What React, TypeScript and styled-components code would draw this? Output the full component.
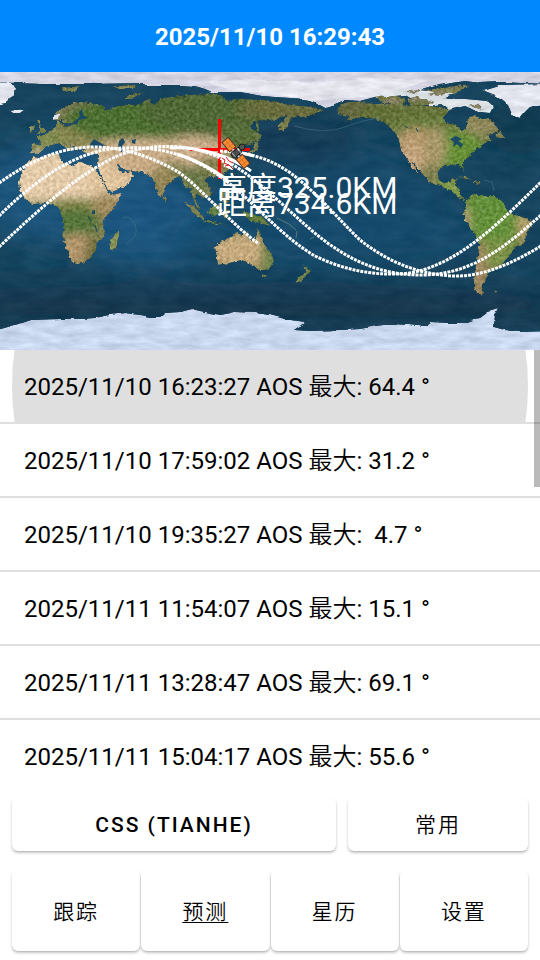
import React, { useState } from "react";
import styled, { createGlobalStyle } from "styled-components";

const GlobalStyle = createGlobalStyle`
  * { box-sizing: border-box; }
  body {
    margin: 0;
    background: #fff;
    color: #000;
    font-family: Roboto, "Noto Sans CJK SC", sans-serif;
  }
  button { font: inherit; color: inherit; cursor: pointer; }
`;

const Screen = styled.div`
  display: flex;
  flex-direction: column;
  height: 100vh;
`;

const Header = styled.header`
  flex: none;
  display: flex;
  align-items: center;
  justify-content: center;
  height: 72px;
  padding-top: 2px;
  background: #0088ff;
`;

const Clock = styled.h1`
  margin: 0;
  color: #fff;
  font-size: 24px;
  line-height: 32px;
  font-weight: 700;
`;

const MapView = styled.svg`
  flex: none;
  display: block;
  width: 100%;
  height: auto;
`;

const PassSection = styled.section`
  position: relative;
  flex: 1 1 0;
  min-height: 0;
  overflow: hidden;
`;

const PassList = styled.ul`
  margin: 0;
  padding: 0;
  list-style: none;
`;

const PassItem = styled.li`
  border-bottom: 2px solid #dfdfdf;

  &:last-child { border-bottom: 0; }
`;

const PassButton = styled.button<{ $active: boolean }>`
  position: relative;
  display: block;
  width: 100%;
  height: 72px;
  padding: 2px 24px 0;
  border: 0;
  background: none;
  text-align: left;
  font-size: 24px;
  line-height: 32px;
  white-space: pre;
  clip-path: inset(0 0 -2px 0);

  &::before {
    content: "";
    display: ${(p) => (p.$active ? "block" : "none")};
    position: absolute;
    left: 12px;
    right: 12px;
    top: 50%;
    aspect-ratio: 1;
    border-radius: 50%;
    background: #dfdfdf;
    transform: translateY(-50%);
  }
`;

const PassText = styled.span`
  position: relative;
`;

const LightLabel = styled.span`
  font-weight: 350;
`;

const ScrollThumb = styled.div`
  position: absolute;
  top: 0;
  right: 0;
  width: 6px;
  height: 31%;
  background: rgba(0, 0, 0, 0.27);
`;

const Controls = styled.div`
  flex: none;
  display: grid;
  grid-template-columns: 9fr 5fr;
  gap: 12px;
  padding: 5px 12px 19px;
`;

const Tabs = styled.nav`
  flex: none;
  display: grid;
  grid-template-columns: repeat(4, 1fr);
  gap: 1px;
  padding: 0 12px 9px;
`;

const Key = styled.button<{ $tall?: boolean; $current?: boolean }>`
  height: ${(p) => (p.$tall ? 81 : 54)}px;
  padding: 2px 0 0;
  border: 0;
  border-radius: 6px;
  background: #fff;
  box-shadow: 0 2px 3px rgba(0, 0, 0, 0.22), 0 1px 1px rgba(0, 0, 0, 0.08);
  font-size: 21px;
  line-height: 28px;
  font-weight: ${(p) => (p.$tall ? 350 : 500)};
  letter-spacing: 2px;
  text-decoration: ${(p) => (p.$current ? "underline" : "none")};
  text-decoration-thickness: 1px;
  text-underline-offset: 3px;
`;

const passes = [
  ["2025/11/10 16:23:27", "64.4"],
  ["2025/11/10 17:59:02", "31.2"],
  ["2025/11/10 19:35:27", " 4.7"],
  ["2025/11/11 11:54:07", "15.1"],
  ["2025/11/11 13:28:47", "69.1"],
  ["2025/11/11 15:04:17", "55.6"],
];

const tabs = ["跟踪", "预测", "星历", "设置"];

const land = [
  // Africa, Arabia, Madagascar
  "M32 157L27 163L22 171L19 182L20 190L25 199L32 204L45 203L53 204L59 208L63 220L64 228L62 236L66 248L72 262L76 264L83 263L90 258L96 249L97 243L104 237L105 232L103 222L108 214L115 207L120 197L121 193L111 195L108 192L103 182L95 168L84 163L78 161L74 166L64 163L60 158L59 154L50 154L39 158Z",
  "M98 168L100 158L115 160L118 168L122 173L131 171L134 176L128 184L121 188L112 192L108 190L104 182Z",
  "M119 230L119 238L116 248L112 250L110 246L111 240Z",
  // Europe and Asia
  "M31 153L31 147L33 144L41 145L40 140L36 137L44 135L49 132L55 128L57 123L59 119L61 124L66 127L76 124L77 119L72 123L64 124L62 119L57 121L54 118L55 113L60 110L68 105L76 102L85 102L95 104L105 107L104 111L99 112L108 110L120 106L130 105L140 104L146 100L150 99L151 104L158 103L160 99L172 97L190 95L215 94L222 96L228 101L240 99L255 100L270 101L285 104L300 106L312 107L323 110L320 112L313 113L316 114L305 117L298 116L290 119L288 126L283 132L278 130L279 124L288 116L280 117L277 120L262 120L256 121L250 126L252 129L256 131L258 136L255 141L250 145L244 144L243 149L240 150L239 154L236 154L235 149L231 148L233 152L235 158L230 168L222 175L214 177L208 177L205 180L210 188L211 195L204 199L201 196L196 194L195 200L199 206L201 211L196 206L193 198L190 187L186 188L183 182L180 176L175 179L167 184L165 190L162 198L158 194L155 185L152 177L148 176L143 172L132 171L125 170L119 165L117 164L119 171L98 166L99 154L90 154L83 152L84 149L80 147L77 151L73 147L69 143L73 149L68 151L64 146L60 143L52 145L45 147L42 152L36 154Z",
  "M37 121L40 121L41 127L46 131L43 133L37 133L40 129ZM30 127L34 125L35 130L30 132ZM60 88L80 86L76 91L64 91ZM124 99L130 94L146 92L139 94L132 99ZM112 86L135 85L136 88L118 88Z",
  "M165 195L167 199L165 202L163 199ZM257 132L262 135L258 142L258 149L253 153L246 156L246 153L254 149L255 141Z",
  "M256 121L259 124L259 132L256 129ZM222 187L226 189L225 197L229 202L226 206L222 198ZM185 201L190 204L199 211L205 219L202 220L192 212ZM203 220L218 223L231 225L216 224L205 222ZM209 210L216 204L222 203L220 213L213 217L208 213ZM224 210L231 211L227 214L230 220L224 217Z",
  "M242 211L252 214L262 217L271 226L263 224L252 221L246 218Z",
  // Australia and New Zealand
  "M215 247L222 241L232 237L236 232L242 235L248 231L247 236L253 241L256 237L258 228L261 235L265 245L272 255L274 261L270 268L265 270L258 270L254 266L249 263L240 260L230 263L218 265L217 258Z",
  "M262 274L267 275L265 278L262 277ZM303 264L308 269L311 271L306 276L301 281L295 283L299 277L306 273Z",
  // The Americas
  "M337 110L342 104L348 102L360 102L375 104L395 104L410 106L430 106L445 109L452 108L447 113L443 118L446 123L455 125L463 131L466 129L468 117L475 116L483 119L488 118L495 124L499 130L494 134L487 135L492 140L485 143L480 147L474 151L470 155L465 160L463 164L464 172L461 168L458 164L448 165L441 167L438 173L439 180L444 183L450 182L452 178L457 179L455 185L460 190L460 196L466 199L464 200L456 195L450 190L440 186L430 183L424 176L415 165L411 161L415 168L420 175L413 169L408 160L401 150L399 140L396 134L390 128L384 122L375 119L365 117L355 118L345 122L350 117L340 114Z",
  "M495 136L500 131L505 138L499 138ZM458 176L466 177L472 180L464 179ZM474 181L482 182L479 184L474 183ZM375 96L395 95L405 99L403 105L382 103ZM407 100L425 98L430 105L412 106ZM425 90L450 87L470 85L455 94L430 94Z",
  "M466 200L474 194L482 196L494 196L502 201L507 209L508 213L519 216L532 221L531 226L526 233L525 243L515 247L509 256L503 263L500 268L491 270L488 275L485 281L481 287L484 295L478 294L474 288L474 278L476 265L479 250L479 240L472 231L465 219L463 213L466 206ZM493 290L498 291L496 293Z",
].join("");

const arcticIce =
  "M-6 66H546V84L520 83L500 82L480 83L465 81L440 85L425 89L410 94L388 93L375 97L360 101L345 100L335 104L327 109L318 104L308 99L290 98L262 96L240 92L212 92L205 89L195 86L180 85L145 85L143 83L90 84L40 84L-6 82Z";

const greenlandIce =
  "M-4 82L12 83L15 87L14 94L9 97L7 104L-4 106ZM9 110L16 109L24 110L20 113L13 113ZM53 115L60 113L58 119L53 120ZM482 90L498 85L546 84V105L530 107L525 112L520 118L511 115L508 107L503 100L495 95Z";

const canadianIce =
  "M376 94L400 88L430 91L454 94L442 98L466 99L488 101L494 107L491 113L478 112L465 106L449 110L441 104L431 106L425 99L412 99L405 95L386 97Z";

const antarctica =
  "M-6 331L15 325L30 320L60 319L80 319L95 318L110 315L125 313L140 315L150 317L160 317L165 313L180 312L192 309L200 311L210 313L222 315L235 312L255 313L270 315L285 319L305 322L300 326L294 330L310 331L340 330L360 329L375 326L392 324L410 325L427 327L430 322L450 323L466 323L472 321L468 320L480 318L488 312L498 309L495 315L494 327L505 330L520 332L546 331V356H-6Z";

type Blob = [number, number, number, number, string];

const terrain: Blob[] = [
  [62, 178, 70, 27, "#e3caa8"],
  [116, 176, 29, 24, "#e0c49e"],
  [75, 207, 42, 9, "#80834a"],
  [76, 221, 24, 13, "#56743a"],
  [107, 205, 14, 13, "#a18c5e"],
  [78, 249, 18, 15, "#b3966c"],
  [92, 252, 8, 14, "#74703f"],
  [114, 240, 8, 12, "#8c9656"],
  [50, 138, 28, 11, "#7f8a50"],
  [75, 134, 20, 8, "#868650"],
  [85, 106, 22, 8, "#777654"],
  [130, 119, 65, 20, "#4d7032"],
  [210, 112, 70, 23, "#506834"],
  [285, 109, 50, 11, "#686c3c"],
  [90, 150, 16, 5, "#b29c6e"],
  [140, 151, 50, 13, "#c9ad89"],
  [195, 151, 34, 15, "#caae8b"],
  [138, 165, 25, 11, "#c9ab85"],
  [163, 182, 13, 16, "#948657"],
  [216, 167, 20, 11, "#827f50"],
  [195, 182, 17, 13, "#6a7848"],
  [240, 136, 21, 13, "#596e3b"],
  [215, 212, 14, 13, "#658044"],
  [253, 217, 20, 10, "#607c3d"],
  [240, 251, 33, 17, "#c6aa7e"],
  [268, 255, 7, 20, "#6e8348"],
  [303, 274, 12, 12, "#73844b"],
  [360, 110, 30, 11, "#62663c"],
  [410, 116, 52, 13, "#637139"],
  [475, 126, 24, 10, "#90885c"],
  [426, 126, 35, 12, "#6b7d3f"],
  [458, 151, 28, 20, "#668f39"],
  [417, 147, 22, 19, "#b3976b"],
  [412, 160, 12, 18, "#c3a47e"],
  [436, 147, 11, 20, "#a69768"],
  [450, 190, 16, 12, "#7d9746"],
  [490, 220, 37, 29, "#65903b"],
  [525, 226, 9, 16, "#ad9c69"],
  [497, 253, 22, 14, "#7b9147"],
  [479, 269, 7, 30, "#a08661"],
  [465, 222, 4, 17, "#c0a181"],
];

const oceanShade: Blob[] = [
  [80, 191, 110, 55, "#1c557b"],
  [150, 225, 85, 40, "#1c5680"],
  [345, 195, 110, 45, "#174969"],
  [330, 235, 160, 30, "#174c6d"],
  [300, 140, 60, 26, "#153e59"],
  [520, 128, 32, 26, "#113a4f"],
  [230, 291, 330, 15, "#153e58"],
  [340, 311, 310, 13, "#153448"],
  [60, 310, 110, 13, "#153448"],
];

const orbitStart = "M220 151C245 152 264 157 281 167C309 183 335 216 360 240C383 258 413 274 453 276C483 277 513 263 541 246";
const orbitSecond = "M-1 247C35 213 70 181 109 160C137 145 177 142 208 153C256 169 297 225 338 250C363 266 389 275 421 275C471 275 504 248 541 215";
const orbitThird = "M-1 216C35 180 79 148 124 148C160 146 190 156 215 173C248 194 277 234 315 256C344 270 371 275 400 274C453 271 500 222 541 182";
const orbitEnd = "M-1 183C28 163 56 147 95 147C123 147 153 157 180 173C205 192 229 222 259 244";

function Satellite() {
  return (
    <g>
      <g transform="translate(236 153) rotate(50)">
        <path d="M-17 -4H-5V4H-17ZM5 -4H17V4H5Z" fill="#ff8c32" stroke="#5a3520" strokeWidth="1" />
        <path d="M-13 -4V4M-9 -4V4M-17 0H-5M9 -4V4M13 -4V4M5 0H17" stroke="#b9622a" strokeWidth="0.6" />
        <path d="M-5 0H5" stroke="#ddd" strokeWidth="2" />
      </g>
      <g transform="translate(236 153) rotate(-40)">
        <rect x="-5" y="-3" width="11" height="6" rx="2" fill="#4b4b4b" stroke="#171717" />
        <path d="M-3 -3V3M4 -3V3" stroke="#a7adac" />
      </g>
      <path d="M238 150L242 147" stroke="#ddd" strokeWidth="2" />
      <circle cx="242" cy="147" r="3" fill="#555" stroke="#1b1b1b" />
    </g>
  );
}

function WorldMap() {
  return (
    <MapView viewBox="0 72 540 278" role="img" aria-label="CSS (TIANHE)">
      <defs>
        <clipPath id="landShape"><path d={land} /></clipPath>
        <filter id="soft" x="-40%" y="-40%" width="180%" height="180%">
          <feGaussianBlur stdDeviation="4" />
        </filter>
        <filter id="seaSoft" x="-30%" y="-50%" width="160%" height="200%">
          <feGaussianBlur stdDeviation="13" />
        </filter>
        <filter id="landGrain" filterUnits="userSpaceOnUse" x="0" y="72" width="540" height="278" colorInterpolationFilters="sRGB">
          <feTurbulence type="fractalNoise" baseFrequency="0.3" numOctaves="3" seed="8" result="noise" />
          <feDisplacementMap in="SourceGraphic" in2="noise" scale="4" xChannelSelector="R" yChannelSelector="G" result="coast" />
          <feColorMatrix in="noise" values="1 0 0 0 0 1 0 0 0 0 1 0 0 0 0 0 0 0 0 1" result="grey" />
          <feComposite in="coast" in2="grey" operator="arithmetic" k2="1" k3="0.28" k4="-0.14" result="grain" />
          <feComposite in="grain" in2="coast" operator="in" />
        </filter>
        <filter id="seaGrain" filterUnits="userSpaceOnUse" x="0" y="72" width="540" height="278" colorInterpolationFilters="sRGB">
          <feTurbulence type="fractalNoise" baseFrequency="0.04 0.1" numOctaves="4" seed="3" result="noise" />
          <feColorMatrix in="noise" values="1 0 0 0 0 1 0 0 0 0 1 0 0 0 0 0 0 0 0 1" result="grey" />
          <feComposite in="SourceGraphic" in2="grey" operator="arithmetic" k2="1" k3="0.08" k4="-0.04" />
        </filter>
        <filter id="iceGrain" filterUnits="userSpaceOnUse" x="-8" y="64" width="556" height="294" colorInterpolationFilters="sRGB">
          <feTurbulence type="fractalNoise" baseFrequency="0.05 0.16" numOctaves="4" seed="5" result="noise" />
          <feDisplacementMap in="SourceGraphic" in2="noise" scale="4" xChannelSelector="R" yChannelSelector="G" result="coast" />
          <feColorMatrix in="noise" values="1 0 0 0 0 1 0 0 0 0 1 0 0 0 0 0 0 0 0 1" result="grey" />
          <feComposite in="coast" in2="grey" operator="arithmetic" k2="1" k3="0.18" k4="-0.1" result="grain" />
          <feComposite in="grain" in2="coast" operator="in" />
        </filter>
      </defs>

      <g filter="url(#seaGrain)">
        <rect y="72" width="540" height="278" fill="#17455f" />
        <g filter="url(#seaSoft)">
          {oceanShade.map(([cx, cy, rx, ry, fill], i) => (
            <ellipse key={i} cx={cx} cy={cy} rx={rx} ry={ry} fill={fill} />
          ))}
        </g>
      </g>

      <g filter="url(#landGrain)">
        <g clipPath="url(#landShape)">
          <rect y="72" width="540" height="278" fill="#7d7f50" />
          <g filter="url(#soft)">
            {terrain.map(([cx, cy, rx, ry, fill], i) => (
              <ellipse key={i} cx={cx} cy={cy} rx={rx} ry={ry} fill={fill} />
            ))}
          </g>
        </g>
      </g>

      <g fill="#1a4a66">
        <path d="M90 144L94 139L99 142L106 146L99 148L91 148ZM119 141L123 138L125 142L122 146L125 151L121 152L118 147ZM132 140L136 139L135 144L132 143ZM79 112L82 109L83 115L88 118L79 120L77 125L75 122L80 116Z" />
        <path d="M450 139L456 136L462 139L458 141L463 144L461 148L457 144L453 147L454 142ZM92 211L95 210L95 214L92 214Z" />
      </g>
      <path d="M88 216L91 222M95 225L97 232M416 128L418 132M405 126L408 128" stroke="#1a4a66" strokeWidth="1" />

      <g filter="url(#iceGrain)">
        <path d={arcticIce} fill="#d7d6e5" />
        <path d="M205 82L250 79L310 83L375 78L430 80L380 96L345 98L315 101L280 95L235 91Z" fill="#e7e8f0" />
        <path d={greenlandIce} fill="#e5e8f1" />
        <path d={canadianIce} fill="#dce1e5" />
        <path d={antarctica} fill="#ccdaf1" />
      </g>
      <g filter="url(#landGrain)" fill="#858061">
        <path d="M381 101L393 97L402 102L394 105ZM407 99L417 96L422 100L413 103ZM427 94L440 91L449 92L438 96ZM446 87L462 85L453 90ZM426 103L433 100L434 104ZM468 106L478 104L483 110ZM405 91L420 90L414 94Z" />
      </g>
      <path d="M464 98L470 93L478 91L486 92L491 97L500 102L504 108L499 106L489 100L479 98Z" fill="#1a465d" />
      <path d="M294 126Q325 135 345 127T382 118M123 218Q130 214 135 225T126 244M484 180L492 182L494 191" fill="none" stroke="#537e91" strokeWidth="1" opacity="0.45" />
      <path d="M277 218L289 224L296 230M297 231L296 238M310 239L314 237M481 210L484 211" fill="none" stroke="#719278" strokeWidth="1" opacity="0.7" />

      <g fill="none" stroke="#f00" strokeWidth="3">
        <path d="M219.5 119V179M190 149.5H250" />
      </g>
      <g fill="none" stroke="#fff" strokeWidth="3" strokeDasharray="3 1">
        <path d={orbitStart} />
        <path d={orbitSecond} />
        <path d={orbitThird} />
        <path d={orbitEnd} />
      </g>
      <path d="M170 148C200 146 232 157 251 171M177 154C197 160 211 168 228 180M238 152L254 156" fill="none" stroke="#fff" strokeWidth="3" />
      <path d="M222 157L232 161M222 161L233 165M224 165L233 169" stroke="#fff" strokeWidth="3" />
      <path d="M222 158L225 160L224 163L229 165M226 157L229 161L233 163M225 166L229 165L233 169" stroke="#d22" strokeWidth="1" fill="none" />
      <Satellite />
      <g fill="#fff" fontFamily='Roboto, "Noto Sans CJK SC", sans-serif' fontSize="30">
        <text x="217" y="198">高度325.0KM</text>
        <text x="217" y="214">距离734.6KM</text>
      </g>
    </MapView>
  );
}

export default function App() {
  const [selected, setSelected] = useState(0);
  const [tab, setTab] = useState("预测");

  return (
    <>
      <GlobalStyle />
      <Screen>
        <Header><Clock>2025/11/10 16:29:43</Clock></Header>
        <WorldMap />
        <PassSection>
          <PassList>
            {passes.map(([time, elevation], i) => (
              <PassItem key={time}>
                <PassButton $active={selected === i} onClick={() => setSelected(i)}>
                  <PassText>
                    {time} AOS <LightLabel>最大</LightLabel>: {elevation} °
                  </PassText>
                </PassButton>
              </PassItem>
            ))}
          </PassList>
          <ScrollThumb />
        </PassSection>
        <Controls>
          <Key>CSS (TIANHE)</Key>
          <Key><LightLabel>常用</LightLabel></Key>
        </Controls>
        <Tabs>
          {tabs.map((name) => (
            <Key key={name} $tall $current={tab === name} onClick={() => setTab(name)}>
              {name}
            </Key>
          ))}
        </Tabs>
      </Screen>
    </>
  );
}
